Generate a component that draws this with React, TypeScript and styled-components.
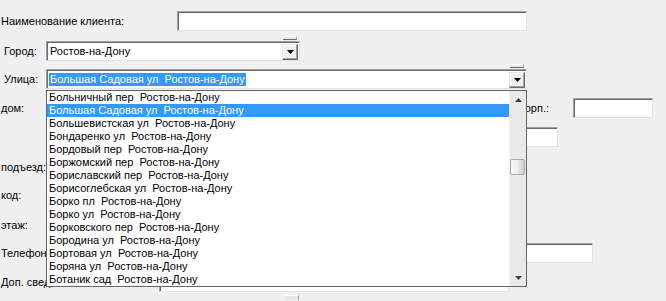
import styled, { createGlobalStyle } from "styled-components";

const streets = [
  "Больничный пер  Ростов-на-Дону",
  "Большая Садовая ул  Ростов-на-Дону",
  "Большевистская ул  Ростов-на-Дону",
  "Бондаренко ул  Ростов-на-Дону",
  "Бордовый пер  Ростов-на-Дону",
  "Боржомский пер  Ростов-на-Дону",
  "Бориславский пер  Ростов-на-Дону",
  "Борисоглебская ул  Ростов-на-Дону",
  "Борко пл  Ростов-на-Дону",
  "Борко ул  Ростов-на-Дону",
  "Борковского пер  Ростов-на-Дону",
  "Бородина ул  Ростов-на-Дону",
  "Бортовая ул  Ростов-на-Дону",
  "Боряна ул  Ростов-на-Дону",
  "Ботаник сад  Ростов-на-Дону",
];

const GlobalStyle = createGlobalStyle`
  html, body {
    margin: 0;
    padding: 0;
    background: #f0f0f0;
  }
  body {
    font-family: "Liberation Sans", Arial, sans-serif;
    font-size: 11px;
    color: #000;
  }
`;

const Form = styled.div`
  position: relative;
  width: 666px;
  height: 301px;
  overflow: hidden;
  box-sizing: border-box;
  padding-top: 11px;
  display: flex;
  flex-direction: column;
`;

const Row = styled.div<{ $h: number; $mt: number }>`
  display: flex;
  align-items: center;
  height: ${(p) => p.$h}px;
  margin-top: ${(p) => p.$mt}px;
  flex-shrink: 0;
`;

const Label = styled.span<{ $w: number; $pl?: number; $right?: boolean }>`
  box-sizing: border-box;
  width: ${(p) => p.$w}px;
  padding-left: ${(p) => p.$pl ?? 1}px;
  text-align: ${(p) => (p.$right ? "right" : "left")};
  white-space: pre;
  flex-shrink: 0;
`;

const Input = styled.div<{ $w: number; $ml: number; $h?: number }>`
  box-sizing: border-box;
  width: ${(p) => p.$w}px;
  height: ${(p) => p.$h ?? 20}px;
  margin-left: ${(p) => p.$ml}px;
  flex-shrink: 0;
  background: #fff;
  border: 1px solid;
  border-color: #a0a0a0 #e3e3e3 #e3e3e3 #a0a0a0;
  box-shadow: inset 1px 1px 0 #696969;
`;

const Combo = styled.div<{ $w: number }>`
  position: relative;
  box-sizing: border-box;
  width: ${(p) => p.$w}px;
  height: 20px;
  flex-shrink: 0;
  display: flex;
  align-items: center;
  background: #fff;
  border: 1px solid;
  border-color: #a0a0a0 #e3e3e3 #e3e3e3 #a0a0a0;
  box-shadow: inset 1px 1px 0 #696969;
  padding: 1px 1px 1px 2px;
`;

const ComboText = styled.span<{ $selected?: boolean }>`
  flex: 1;
  line-height: 13px;
  white-space: pre;
  overflow: hidden;
  span {
    display: inline-block;
    height: 13px;
    padding: 0 1px;
    background: ${(p) => (p.$selected ? "#3399ff" : "transparent")};
    color: ${(p) => (p.$selected ? "#fff" : "#000")};
  }
`;

const ComboButton = styled.div`
  box-sizing: border-box;
  width: 16px;
  height: 16px;
  margin-top: 1px;
  display: flex;
  align-items: center;
  justify-content: center;
  background: #f0f0f0;
  border: 1px solid;
  border-color: #e3e3e3 #696969 #696969 #e3e3e3;
  box-shadow: inset -1px -1px 0 #a0a0a0, inset 1px 1px 0 #fff;
`;

const Tab = styled.div`
  position: absolute;
  top: -6px;
  right: 2px;
  width: 14px;
  height: 4px;
  box-sizing: border-box;
  background: #e6e6e6;
  border-top: 1px solid #fff;
  border-bottom: 1px solid #696969;
  border-right: 1px solid #a0a0a0;
`;

const SmallTab = styled.div`
  box-sizing: border-box;
  width: 14px;
  height: 5px;
  margin-left: 285px;
  background: #e6e6e6;
  border-top: 1px solid #fff;
  border-left: 1px solid #e3e3e3;
  border-right: 1px solid #a0a0a0;
`;

const Dropdown = styled.div`
  position: absolute;
  top: 20px;
  left: -1px;
  width: 481px;
  height: 197px;
  box-sizing: border-box;
  background: #fff;
  border: 1px solid #646464;
  display: flex;
  z-index: 10;
`;

const List = styled.div`
  flex: 1;
  display: flex;
  flex-direction: column;
  overflow: hidden;
`;

const Item = styled.div<{ $active?: boolean }>`
  height: 13px;
  line-height: 13px;
  padding-left: 2px;
  white-space: pre;
  background: ${(p) => (p.$active ? "#3399ff" : "#fff")};
  color: ${(p) => (p.$active ? "#fff" : "#000")};
`;

const Scrollbar = styled.div`
  width: 17px;
  flex-shrink: 0;
  background: #eaeaea;
  border-left: 1px solid #f2f2f2;
  box-sizing: border-box;
  display: flex;
  flex-direction: column;
  align-items: center;
`;

const Arrow = styled.div`
  height: 17px;
  display: flex;
  align-items: center;
  justify-content: center;
`;

const Track = styled.div`
  flex: 1;
  width: 100%;
  padding-top: 51px;
  box-sizing: border-box;
`;

const Thumb = styled.div`
  box-sizing: border-box;
  width: 15px;
  height: 16px;
  border: 1px solid #a9a9a9;
  border-radius: 2px;
  background: linear-gradient(to right, #f8f8f8 0%, #ececec 50%, #cfcfcf 100%);
`;

const DownTri = () => (
  <svg width="7" height="4" viewBox="0 0 7 4">
    <polygon points="0,0 7,0 3.5,4" fill="#000" />
  </svg>
);

const ScrollTri = ({ up }: { up?: boolean }) => (
  <svg width="7" height="4" viewBox="0 0 7 4">
    <polygon points={up ? "0,4 7,4 3.5,0" : "0,0 7,0 3.5,4"} fill="#404040" />
  </svg>
);

export default function App() {
  return (
    <>
      <GlobalStyle />
      <Form>
        <Row $h={20} $mt={0}>
          <Label $w={176}>Наименование клиента:</Label>
          <Input $w={350} $ml={1} />
        </Row>

        <Row $h={20} $mt={10}>
          <Label $w={46} $pl={4}>Город:</Label>
          <Combo $w={254}>
            <Tab />
            <ComboText>
              <span>Ростов-на-Дону</span>
            </ComboText>
            <ComboButton>
              <DownTri />
            </ComboButton>
          </Combo>
        </Row>

        <Row $h={20} $mt={8}>
          <Label $w={46} $pl={4}>Улица:</Label>
          <Combo $w={481}>
            <Tab />
            <ComboText $selected>
              <span>Большая Садовая ул  Ростов-на-Дону</span>
            </ComboText>
            <ComboButton>
              <DownTri />
            </ComboButton>
            <Dropdown>
              <List>
                {streets.map((s, i) => (
                  <Item key={s} $active={i === 1}>
                    {s}
                  </Item>
                ))}
              </List>
              <Scrollbar>
                <Arrow>
                  <ScrollTri up />
                </Arrow>
                <Track>
                  <Thumb />
                </Track>
                <Arrow>
                  <ScrollTri />
                </Arrow>
              </Scrollbar>
            </Dropdown>
          </Combo>
        </Row>

        <Row $h={20} $mt={9}>
          <Label $w={46}>дом:</Label>
          <Label $w={503} $right>
            Корп.:
          </Label>
          <Input $w={80} $ml={24} />
        </Row>

        <Row $h={20} $mt={9}>
          <Input $w={80} $ml={478} />
        </Row>

        <Row $h={20} $mt={10}>
          <Label $w={46}>подъезд:</Label>
        </Row>

        <Row $h={20} $mt={8}>
          <Label $w={46}>код:</Label>
        </Row>

        <Row $h={20} $mt={10}>
          <Label $w={46}>этаж:</Label>
        </Row>

        <Row $h={20} $mt={8}>
          <Label $w={46}>Телефон:</Label>
          <Input $w={146} $ml={401} />
        </Row>

        <Row $h={20} $mt={9}>
          <Label $w={46}>Доп. свед</Label>
          <Input $w={350} $ml={113} />
        </Row>

        <Row $h={5} $mt={3}>
          <SmallTab />
        </Row>
      </Form>
    </>
  );
}
